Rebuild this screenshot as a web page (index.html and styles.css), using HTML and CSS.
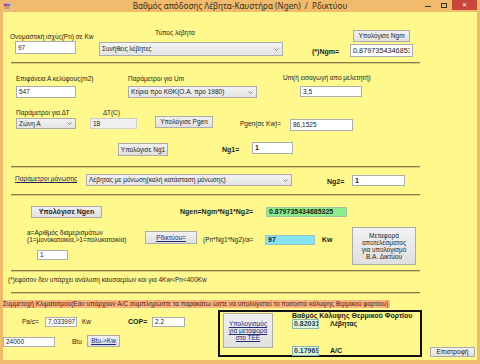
FILE: index.html
```html
<!DOCTYPE html>
<html lang="el">
<head>
<meta charset="utf-8">
<title>Βαθμός απόδοσης Λέβητα-Καυστήρα</title>
<link rel="stylesheet" href="styles.css">
</head>
<body>
<div class="window">
  <div class="titlebar">
    <svg class="appicon" width="8" height="7" viewBox="0 0 8 7">
      <rect x="0" y="0" width="8" height="7" fill="#e8e0f0"/>
      <rect x="0.5" y="0.5" width="3.5" height="3" fill="#c04080"/>
      <rect x="4" y="0.5" width="3.5" height="3" fill="#6080c0"/>
      <rect x="0.5" y="3.5" width="7" height="3" fill="#d8a050"/>
    </svg>
    <div class="title">Βαθμός απόδοσης Λέβητα-Καυστήρα (Ngen)  /  Ρδικτύου</div>
    <div class="caps">
      <span class="cap-min"><span></span></span>
      <span class="cap-max"><span></span></span>
      <span class="cap-close">✕</span>
    </div>
  </div>
  <div class="client">
    <div class="row row-a">
      <div class="cell c-pn">
        <div class="lbl lbl-pn">Ονομαστική ισχύς(Pn) σε Kw</div>
        <div class="inp inp-pn">97</div>
      </div>
      <div class="cell c-type">
        <div class="lbl lbl-type">Τύπος λέβητα</div>
        <div class="sel sel-type"><span>Συνήθεις λέβητες</span><svg class="chev" width="5" height="3" viewBox="0 0 5 3"><polyline points="0.5,0.5 2.5,2.5 4.5,0.5" fill="none" stroke="#666" stroke-width="0.8"/></svg></div>
      </div>
      <div class="lbl b ngm-lbl">(*)Ngm=</div>
      <div class="cell c-ngm">
        <div class="btn btn-ngm">Υπολόγισε Ngm</div>
        <div class="inp inp-ngm"><span class="clip">0,879735434685325</span></div>
      </div>
    </div>
    <div class="sep"></div>

    <div class="row row-b">
      <div class="cell c-area">
        <div class="lbl lbl-top">Επιφάνεια Α κελύφους(m2)</div>
        <div class="inp inp-area">547</div>
      </div>
      <div class="cell c-um">
        <div class="lbl lbl-top">Παράμετροι για Um</div>
        <div class="sel sel-um"><span>Κτίρια προ ΚΘΚ(Ο.Α. προ 1980)</span><svg class="chev" width="5" height="3" viewBox="0 0 5 3"><polyline points="0.5,0.5 2.5,2.5 4.5,0.5" fill="none" stroke="#666" stroke-width="0.8"/></svg></div>
      </div>
      <div class="cell c-umv">
        <div class="lbl lbl-umv">Um(ή εισαγωγή απο μελετητή)</div>
        <div class="inp inp-umv">3,5</div>
      </div>
    </div>

    <div class="row row-c">
      <div class="cell c-dt">
        <div class="lbl lbl-top">Παράμετροι για ΔΤ</div>
        <div class="sel sel-dt"><span>Ζώνη Α</span><svg class="chev" width="5" height="3" viewBox="0 0 5 3"><polyline points="0.5,0.5 2.5,2.5 4.5,0.5" fill="none" stroke="#666" stroke-width="0.8"/></svg></div>
      </div>
      <div class="cell c-dtc">
        <div class="lbl lbl-dtc">ΔΤ(C)</div>
        <div class="inp inp-dis inp-dtc">18</div>
      </div>
      <div class="btn btn-pgen">Υπολόγισε Pgen</div>
      <div class="lbl lbl-pgen">Pgen(σε Kw)=</div>
      <div class="inp inp-pgen">86,1525</div>
    </div>

    <div class="row row-d">
      <div class="btn btn-ng1">Υπολόγισε Ng1</div>
      <div class="lbl b ng1-lbl">Ng1=</div>
      <div class="inp b inp-ng1">1</div>
    </div>
    <div class="sep"></div>

    <div class="row row-e">
      <div class="lbl lbl-ins">Παράμετροι μόνωσης</div>
      <div class="sel sel-ins"><span>Λέβητας με μόνωση(καλή κατάσταση μόνωσης)</span><svg class="chev" width="5" height="3" viewBox="0 0 5 3"><polyline points="0.5,0.5 2.5,2.5 4.5,0.5" fill="none" stroke="#666" stroke-width="0.8"/></svg></div>
      <div class="lbl b ng2-lbl">Ng2=</div>
      <div class="inp b inp-ng2">1</div>
    </div>
    <div class="sep"></div>

    <div class="row row-f">
      <div class="btn b btn-ngen">Υπολόγισε Ngen</div>
      <div class="lbl b ngen-lbl">Ngen=Ngm*Ng1*Ng2=</div>
      <div class="inp b out-ngen">0.879735434685325</div>
    </div>

    <div class="row row-g">
      <div class="cell c-a">
        <div class="lbl lbl-a">a=Αριθμός διαμερισμάτων<br>(1=μονοκατοικία,&gt;1=πολυκατοικία)</div>
        <div class="inp inp-a">1</div>
      </div>
      <div class="btn btn-link btn-rd">Ρδικτύου=</div>
      <div class="lbl rd-lbl">(Pn*Ng1*Ng2)/a=</div>
      <div class="inp b out-rd">97</div>
      <div class="lbl b kw-lbl">Kw</div>
      <div class="btn btn-mt">Μεταφορά<br>αποτελέσματος<br>για υπολογισμό<br>Β.Α. Δικτύου</div>
    </div>
    <div class="sep"></div>

    <div class="row row-note">
      <div class="lbl note">(*)εφόσον δεν υπάρχει ανάλυση καυσαερίων και για 4Kw&lt;Pn&lt;400Kw</div>
    </div>
    <div class="sep"></div>

    <div class="row row-or">
      <div class="lbl band">Συμμετοχή Κλιματισμού(Εάν υπάρχουν A/C συμπληρώστε τα παρακάτω ώστε να υπολογιστεί το ποσοστό κάλυψης θερμικού φορτίου)</div>
    </div>

    <div class="row row-bot">
      <div class="cell c-ac">
        <div class="sub sub1">
          <div class="lbl pac-lbl">Pa/c=</div>
          <div class="inp inp-pac">7,033997</div>
          <div class="lbl kw2-lbl">Kw</div>
          <div class="lbl b cop-lbl">COP=</div>
          <div class="inp inp-cop">2.2</div>
        </div>
        <div class="sub sub2">
          <div class="inp inp-btu">24000</div>
          <div class="lbl btu-lbl">Btu</div>
          <div class="btn btn-link btn-btu">Btu-&gt;Kw</div>
        </div>
      </div>
      <div class="box">
        <div class="btn btn-link btn-tee">Υπολογισμός<br>για μεταφορά<br>στο ΤΕΕ</div>
        <div class="cell c-cov">
          <div class="lbl b cov-title">Βαθμός Κάλυψης Θερμικού Φορτίου</div>
          <div class="sub cov-row">
            <div class="inp b out-cov">0.82031</div>
            <div class="lbl b cov-lbl">Λέβητας</div>
          </div>
          <div class="sub cov-row cov-row2">
            <div class="inp b out-cov">0.17969</div>
            <div class="lbl b cov-lbl">A/C</div>
          </div>
        </div>
      </div>
      <div class="btn btn-back">Επιστροφή</div>
    </div>
  </div>
</div>
</body>
</html>
```

FILE: styles.css
```css
* { box-sizing: border-box; margin: 0; padding: 0; }
html, body { width: 480px; height: 364px; overflow: hidden; }
body {
  font-family: "Liberation Sans", Arial, sans-serif;
  font-size: 6.5px;
  line-height: 8px;
  color: #1c1c1c;
  background: #f0bb6c;
}
.window {
  width: 480px;
  height: 364px;
  display: flex;
  flex-direction: column;
  background: #f0bb6c;
}
.titlebar {
  height: 12px;
  flex: none;
  display: grid;
  grid-template-columns: 1fr auto 1fr;
  align-items: start;
}
.appicon { display: block; margin: 3px 0 0 3px; }
.title {
  font-family: "Noto Sans", "Liberation Sans", sans-serif;
  font-size: 8.1px;
  line-height: 12px;
  color: #3a2f1e;
  white-space: pre;
}
.caps { justify-self: end; display: flex; margin-right: 3px; }
.cap-min, .cap-max { height: 10px; display: flex; align-items: center; justify-content: center; }
.cap-min { width: 16px; }
.cap-min span { width: 6px; height: 1px; background: #3a2f1e; margin-top: 2px; }
.cap-max { width: 16px; }
.cap-max span { width: 6px; height: 5px; border: 1px solid #3a2f1e; }
.cap-close {
  width: 25px;
  height: 10px;
  background: #c7453a;
  color: #fff;
  font-size: 6px;
  line-height: 10px;
  text-align: center;
  font-family: "DejaVu Sans", sans-serif;
}
.client {
  flex: 1;
  margin: 0 3px 4px 3px;
  background: #fff88c;
  display: flex;
  flex-direction: column;
}
.row { display: flex; align-items: flex-start; flex: none; }
.cell { display: flex; flex-direction: column; align-items: flex-start; flex: none; }
.sub { display: flex; align-items: flex-start; }
.lbl { white-space: nowrap; flex: none; }
.b { font-weight: bold; font-size: 7px; }

.inp {
  flex: none;
  background: #fff;
  border: 1px solid #abadb3;
  padding: 0 2px;
  display: flex;
  align-items: center;
  white-space: nowrap;
  overflow: hidden;
}
.clip { display: block; overflow: hidden; width: 100%; }
.inp-dis { background: #efefef; border-color: #cfcfcf; }
.sel {
  flex: none;
  border: 1px solid #acacac;
  background: linear-gradient(#f3f3f3, #e4e4e4);
  padding: 0 3px 0 2px;
  display: flex;
  align-items: center;
  justify-content: space-between;
  white-space: nowrap;
  overflow: hidden;
}
.chev { flex: none; display: block; }
.btn {
  flex: none;
  border: 1px solid #acacac;
  background: linear-gradient(#f1f1f1, #e0e0e0);
  display: flex;
  align-items: center;
  justify-content: center;
  text-align: center;
  white-space: nowrap;
}
.btn-link { color: #1d2b7a; text-decoration: underline; }
.sep {
  flex: none;
  margin-left: 8px;
  width: 409px;
  height: 2px;
  border-top: 1px solid #857a45;
  border-bottom: 1px solid #d8cf78;
}

/* row A */
.row-a { margin-top: 16px; height: 34px; }
.c-pn { margin-left: 7px; width: 89px; }
.lbl-pn { margin-top: 5px; }
.inp-pn { margin-left: 5px; width: 61px; height: 13px; }
.c-type { width: 213px; }
.lbl-type { margin: 1px 0 0 56px; }
.sel-type { margin-top: 5px; width: 184px; height: 14px; }
.ngm-lbl { width: 38px; margin-top: 20px; }
.c-ngm { width: 70px; }
.btn-ngm { margin: 2px 0 0 3px; width: 57px; height: 12px; }
.inp-ngm { margin-top: 2px; width: 63px; height: 13px; font-size: 7.3px; }

/* row B */
.row-b { height: 34px; }
.c-area { margin-left: 13px; width: 112px; }
.lbl-top { margin-top: 11px; }
.inp-area { margin-top: 3px; width: 60px; height: 12px; }
.c-um { width: 155px; }
.sel-um { margin-top: 3px; width: 129px; height: 12px; }
.c-umv { width: 100px; }
.lbl-umv { margin-top: 10px; }
.inp-umv { margin: 4px 0 0 17px; width: 62px; height: 11px; }

/* row C */
.row-c { height: 35px; }
.c-dt { margin-left: 13px; width: 74px; }
.sel-dt { margin-top: 1px; width: 60px; height: 11px; }
.c-dtc { width: 65px; }
.lbl-dtc { margin: 11px 0 0 13px; }
.inp-dtc { margin-top: 1px; width: 47px; height: 11px; }
.btn-pgen { margin-top: 18px; width: 58px; height: 12px; }
.lbl-pgen { margin: 22px 0 0 27px; width: 50px; }
.inp-pgen { margin-top: 21px; width: 63px; height: 12px; }

/* row D */
.row-d { height: 33px; }
.btn-ng1 { margin: 10px 0 0 115px; width: 50px; height: 13px; }
.ng1-lbl { margin: 13px 0 0 54px; width: 30px; }
.inp-ng1 { margin-top: 9px; width: 41px; height: 12px; }

/* row E */
.row-e { height: 26px; }
.lbl-ins { margin: 7px 0 0 12px; width: 71px; text-decoration: underline; color: #1d2455; }
.sel-ins { margin-top: 6px; width: 206px; height: 12px; }
.ng2-lbl { margin: 10px 0 0 35px; width: 25px; }
.inp-ng2 { margin-top: 7px; width: 53px; height: 11px; }

/* row F */
.row-f { height: 30px; }
.btn-ngen { margin: 10px 0 0 28px; width: 71px; height: 12px; }
.ngen-lbl { margin: 12px 0 0 78px; width: 86px; }
.out-ngen { margin-top: 11px; width: 81px; height: 10px; background: #8ded8d; border-color: #9fc79f; }

/* row G */
.row-g { height: 44px; }
.c-a { margin-left: 24px; width: 118px; }
.lbl-a { margin-top: 3px; line-height: 7px; }
.inp-a { margin: 7px 0 0 10px; width: 31px; height: 10px; }
.btn-rd { margin-top: 5px; width: 52px; height: 13px; }
.rd-lbl { margin: 10px 0 0 6px; width: 62px; }
.out-rd { margin-top: 9px; width: 50px; height: 10px; background: #86e3f4; border-color: #8fc8d4; }
.kw-lbl { margin: 10px 0 0 7px; width: 30px; }
.btn-mt { margin-top: 1px; width: 64px; height: 38px; line-height: 7px; }

/* note */
.row-note { height: 20px; }
.note { margin: 4px 0 0 5px; }

/* orange band */
.row-or { height: 15px; }
.band { margin-top: 6px; background: #f9b383; color: #4a1a08; padding-right: 2px; }

/* bottom */
.row-bot { height: 51px; }
.c-ac { width: 215px; }
.sub1 { margin-top: 8px; }
.pac-lbl { margin: 1px 0 0 19px; width: 23px; }
.inp-pac { width: 32px; height: 10px; }
.kw2-lbl { margin: 1px 0 0 5px; width: 46px; }
.cop-lbl { margin-top: 1px; width: 24px; }
.inp-cop { width: 33px; height: 10px; }
.sub2 { margin-top: 8px; }
.inp-btu { margin-top: 2px; width: 52px; height: 10px; }
.btu-lbl { margin: 3px 0 0 17px; width: 15px; }
.btn-btu { width: 33px; height: 12px; }
.box {
  flex: none;
  margin-top: 1px;
  width: 204px;
  height: 47px;
  border: 2px solid #111;
  display: flex;
  align-items: flex-start;
}
.btn-tee { margin: 1px 0 0 3px; width: 50px; height: 35px; line-height: 7px; }
.c-cov { margin-left: 19px; }
.cov-title { line-height: 7px; margin-top: 0; }
.cov-row { margin-top: 0; }
.cov-row2 { margin-top: 17px; }
.out-cov { width: 27px; height: 10px; background: #dcf8dc; border-color: #8cb8b0; color: #1d3d5a; padding: 0 1px; }
.cov-lbl { margin: 1px 0 0 11px; }
.btn-back { margin: 38px 0 0 8px; width: 45px; height: 10px; }
```
